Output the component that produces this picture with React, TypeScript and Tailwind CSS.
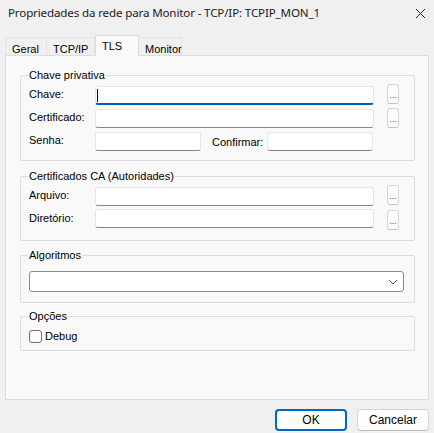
import type { ReactNode } from "react";

const ui = "font-['Liberation_Sans',Arial,sans-serif] text-[11px] text-black";

function TextBox({ width, focused }: { width: string; focused?: boolean }) {
  return (
    <div
      className={`relative h-[19px] ${width} rounded-[3px] border border-[#e6e6e6] bg-white ${
        focused ? "border-b-2 border-b-[#005fb8]" : "border-b-[#868686]"
      }`}
    >
      {focused && <span className="absolute left-[1px] top-[2px] h-[13px] w-px bg-black" />}
    </div>
  );
}

function BrowseButton({ className = "" }: { className?: string }) {
  return (
    <button
      className={`flex h-[20px] w-[12px] items-end justify-center rounded-[3px] border border-[#d5d5d5] border-b-[#c2c2c2] bg-[#fdfdfd] pb-[3px] text-[9px] leading-none text-[#5b1a7a] ${className}`}
    >
      ...
    </button>
  );
}

function Group({ title, className = "", children }: { title: string; className?: string; children: ReactNode }) {
  return (
    <fieldset className={`rounded-[2px] border border-[#dddddd] ${className}`}>
      <legend className="ml-[7px] px-px text-[11px] leading-[14px] text-black">{title}</legend>
      {children}
    </fieldset>
  );
}

function FieldRow({ label, children, className = "" }: { label: string; children: ReactNode; className?: string }) {
  return (
    <div className={`flex items-center ${className}`}>
      <span className="w-[66px] pt-[2px]">{label}</span>
      {children}
    </div>
  );
}

export default function App() {
  const tabs = ["Geral", "TCP/IP", "TLS", "Monitor"];
  const tabWidths = ["w-[42px]", "w-[49px]", "w-[44px]", "w-[44px]"];

  return (
    <div className={`flex h-[433px] w-[434px] flex-col bg-[#f0f0f0] ${ui}`}>
      {/* title bar */}
      <div className="flex h-[26px] items-center justify-between pl-[8px] pr-[6px]">
        <span className="font-['Noto_Sans',sans-serif] text-[11.6px] tracking-[-0.15px] text-[#1a1a1a]">
          Propriedades da rede para Monitor - TCP/IP: TCPIP_MON_1
        </span>
        <svg width="11" height="11" viewBox="0 0 11 11" className="mr-[2px]">
          <path d="M1 1 L10 10 M10 1 L1 10" stroke="#222" strokeWidth="1" />
        </svg>
      </div>

      {/* tab strip */}
      <div className="mt-[9px] flex h-[20px] items-end pl-[5px]">
        {tabs.map((t, i) => {
          const active = t === "TLS";
          return (
            <div
              key={t}
              className={`relative flex ${tabWidths[i]} justify-start border border-b-0 pl-[6px] ${
                active
                  ? "z-10 -mb-px h-[21px] border-[#dddddd] bg-[#f9f9f9] pt-[2px]"
                  : "h-[18px] border-[#e3e3e3] bg-[#f0f0f0] pt-[3px]"
              } ${i > 0 && !active ? "-ml-px" : ""}`}
            >
              {t}
            </div>
          );
        })}
      </div>

      {/* tab page */}
      <div className="mx-[5px] flex h-[345px] flex-col border border-[#dddddd] bg-[#f9f9f9] pl-[14px] pr-[13px] pt-[12px]">
        <Group title="Chave privativa" className="h-[93px]">
          <div className="pl-[8px]">
            <FieldRow label="Chave:" className="h-[23px]">
              <div className="mt-[4px]">
                <TextBox width="w-[279px]" focused />
              </div>
              <BrowseButton className="ml-[13px]" />
            </FieldRow>
            <FieldRow label="Certificado:" className="h-[23px]">
              <div className="mt-[3px]">
                <TextBox width="w-[279px]" />
              </div>
              <BrowseButton className="ml-[13px] mt-[2px]" />
            </FieldRow>
            <FieldRow label="Senha:" className="h-[23px]">
              <div className="mt-[3px] flex items-center">
                <TextBox width="w-[106px]" />
                <span className="ml-[11px] w-[55px] pt-[2px]">Confirmar:</span>
                <TextBox width="w-[106px]" />
              </div>
            </FieldRow>
          </div>
        </Group>

        <Group title="Certificados CA (Autoridades)" className="mt-[8px] h-[72px]">
          <div className="pl-[8px]">
            <FieldRow label="Arquivo:" className="h-[23px]">
              <div className="mt-[4px]">
                <TextBox width="w-[279px]" />
              </div>
              <BrowseButton className="ml-[13px]" />
            </FieldRow>
            <FieldRow label="Diretório:" className="h-[23px]">
              <div className="mt-[2px]">
                <TextBox width="w-[279px]" />
              </div>
              <BrowseButton className="ml-[13px] mt-[4px]" />
            </FieldRow>
          </div>
        </Group>

        <Group title="Algoritmos" className="mt-[7px] h-[55px]">
          <div className="pl-[8px] pt-[9px]">
            <div className="flex h-[21px] w-[375px] items-center justify-end rounded-[3px] border border-[#8a8a8a] bg-white pr-[5px]">
              <svg width="10" height="6" viewBox="0 0 10 6">
                <path d="M1 1 L5 5 L9 1" fill="none" stroke="#555" strokeWidth="1" />
              </svg>
            </div>
          </div>
        </Group>

        <Group title="Opções" className="mt-[6px] h-[42px]">
          <label className="flex items-center pl-[8px] pt-[5px]">
            <span className="h-[13px] w-[13px] rounded-[3px] border border-[#6f6f6f] bg-[#fbfbfb]" />
            <span className="ml-[3px]">Debug</span>
          </label>
        </Group>
      </div>

      {/* dialog buttons */}
      <div className="mt-[9px] flex justify-end gap-[10px] pr-[5px]">
        <button className="h-[22px] w-[72px] rounded-[4px] border-2 border-[#0067c0] bg-[#fdfdfd] text-[12px]">
          OK
        </button>
        <button className="h-[22px] w-[72px] rounded-[4px] border border-[#d5d5d5] border-b-[#bdbdbd] bg-[#fdfdfd] text-[12px]">
          Cancelar
        </button>
      </div>
    </div>
  );
}
